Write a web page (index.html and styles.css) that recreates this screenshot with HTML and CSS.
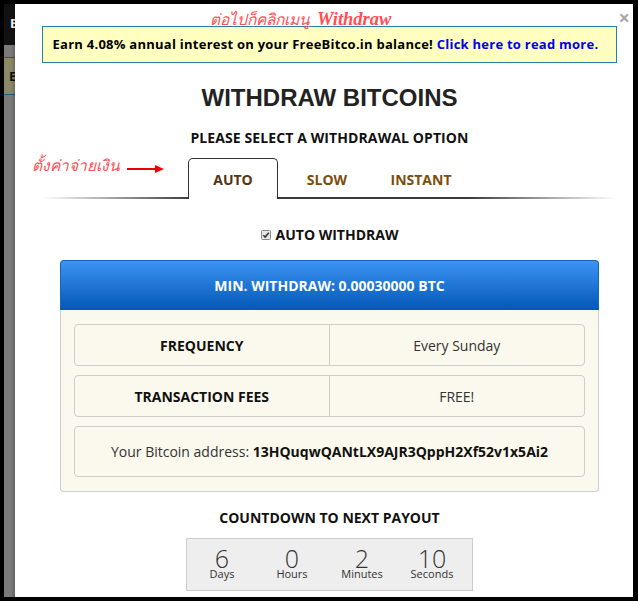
FILE: index.html
```html
<!DOCTYPE html>
<html>
<head>
<meta charset="utf-8">
<link rel="stylesheet" href="styles.css">
</head>
<body>
<div class="frame">
  <div class="backdrop">
    <div class="bd-top"><span>BTC</span></div>
    <div class="bd-gap"></div>
    <div class="bd-box"><span>E</span></div>
    <div class="bd-rest"></div>
  </div>
  <div class="modal">
    <span class="close">×</span>
    <div class="note note-top">ต่อไปก็คลิกเมนู <b>Withdraw</b></div>
    <div class="note note-side">ตั้งค่าจ่ายเงิน</div>
    <svg class="arrow" width="38" height="10" viewBox="0 0 38 10"><line x1="0" y1="5" x2="30" y2="5" stroke="#e00" stroke-width="2"/><polygon points="28,1 37,5 28,9" fill="#e00"/></svg>

    <div class="banner">Earn 4.08% annual interest on your FreeBitco.in balance! <a class="banner-link">Click here to read more.</a></div>

    <h1 class="title">WITHDRAW BITCOINS</h1>
    <h2 class="subtitle">PLEASE SELECT A WITHDRAWAL OPTION</h2>

    <div class="tabs">
      <div class="tab tab-active">AUTO</div>
      <div class="tab">SLOW</div>
      <div class="tab">INSTANT</div>
    </div>

    <div class="auto">
      <span class="check"><svg width="10" height="10" viewBox="0 0 10 10"><rect x="0.5" y="0.5" width="9" height="9" rx="1" fill="#e6e6e6" stroke="#8a8a8a"/><path d="M2.3 5.2 L4.2 7.1 L7.8 2.8" fill="none" stroke="#333" stroke-width="1.6"/></svg></span>
      <span>AUTO WITHDRAW</span>
    </div>

    <div class="panel">
      <div class="panel-head">MIN. WITHDRAW: 0.00030000 BTC</div>
      <div class="panel-body">
        <div class="row">
          <div class="cell cell-key">FREQUENCY</div>
          <div class="cell">Every Sunday</div>
        </div>
        <div class="row">
          <div class="cell cell-key">TRANSACTION FEES</div>
          <div class="cell">FREE!</div>
        </div>
        <div class="row row-single">Your Bitcoin address: <b>13HQuqwQANtLX9AJR3QppH2Xf52v1x5Ai2</b></div>
      </div>
    </div>

    <div class="cd-title">COUNTDOWN TO NEXT PAYOUT</div>
    <div class="countdown">
      <div class="cd-col"><span class="cd-num">6</span><span class="cd-lbl">Days</span></div>
      <div class="cd-col"><span class="cd-num">0</span><span class="cd-lbl">Hours</span></div>
      <div class="cd-col"><span class="cd-num">2</span><span class="cd-lbl">Minutes</span></div>
      <div class="cd-col"><span class="cd-num">10</span><span class="cd-lbl">Seconds</span></div>
    </div>
  </div>
</div>
</body>
</html>
```

FILE: styles.css
```css
* { box-sizing: border-box; }
html, body { margin: 0; padding: 0; }
body {
  background: #000;
  font-family: "Open Sans", "Noto Sans", sans-serif;
  color: #111;
}
.frame {
  display: flex;
  padding: 4px 5px 4px 4px;
  height: 601px;
}
.backdrop {
  width: 11px;
  display: flex;
  flex-direction: column;
  overflow: hidden;
  position: relative;
}
.backdrop::after {
  content: "";
  position: absolute;
  top: 0; bottom: 0; right: 0;
  width: 4px;
  background: linear-gradient(to right, rgba(0,0,0,0), rgba(0,0,0,0.2));
}
.bd-top {
  height: 41px;
  background: #121212;
  color: #fff;
  font-weight: 700;
  font-size: 13px;
  line-height: 18px;
  padding: 10px 0 0 6px;
  white-space: nowrap;
  overflow: hidden;
}
.bd-gap { height: 12px; background: #7b7b7b; }
.bd-box {
  height: 38px;
  background: #8a8868;
  border-top: 1px solid #1e5c78;
  border-bottom: 1px solid #1e5c78;
  font-weight: 700;
  font-size: 13px;
  line-height: 18px;
  padding: 9px 0 0 5px;
  color: #111;
  overflow: hidden;
}
.bd-rest { flex: 1; background: #7b7b7b; }

.modal {
  width: 618px;
  height: 593px;
  background: #fff;
  position: relative;
  padding: 22px 16px 0 27px;
  overflow: hidden;
}
.close {
  position: absolute;
  top: 2px;
  right: 3px;
  font-size: 20px;
  font-weight: 700;
  color: #a8a8a8;
  line-height: 24px;
}
.note {
  position: absolute;
  color: #ff4f55;
  font-size: 15.5px;
  font-style: italic;
  line-height: 20px;
  white-space: nowrap;
}
.note b {
  font-family: "Liberation Serif", serif;
  font-size: 18.5px;
  font-weight: 700;
  font-style: italic;
  margin-left: 3px;
}
.note-top { left: 195px; top: 5px; }
.note-side { left: 17px; top: 151px; }
.arrow { position: absolute; left: 112px; top: 160px; }

.banner {
  height: 37px;
  border: 1px solid #2a80a2;
  background: #ffffc0;
  font-size: 13px;
  font-weight: 700;
  color: #000;
  text-align: center;
  line-height: 35px;
  white-space: nowrap;
  letter-spacing: 0.25px;
  padding-right: 8px;
}
.banner-link { color: #0000f0; }

.title {
  margin: 23px 0 0;
  font-family: "Liberation Sans", Arial, sans-serif;
  font-size: 24px;
  line-height: 24px;
  font-weight: 700;
  color: #222;
  text-align: center;
}
.subtitle {
  margin: 18px 0 0;
  font-size: 14px;
  line-height: 20px;
  font-weight: 700;
  text-align: center;
  color: #111;
  letter-spacing: 0.1px;
}

.tabs {
  margin-top: 10px;
  display: flex;
  justify-content: center;
  gap: 4px;
  padding-right: 5px;
  background: linear-gradient(to right, rgba(60,60,60,0) 0%, #3a3a3a 26%, #3a3a3a 74%, rgba(60,60,60,0) 100%) left bottom / 100% 2px no-repeat;
}
.tab {
  width: 90px;
  height: 41px;
  padding-top: 11px;
  font-size: 14px;
  line-height: 20px;
  font-weight: 700;
  text-align: center;
  color: #7c4e0c;
  border: 1px solid transparent;
  border-bottom: 0;
}
.tab-active {
  color: #533510;
  background: #fff;
  border-color: #333;
  border-radius: 5px 5px 0 0;
}

.auto {
  margin-top: 26px;
  display: flex;
  justify-content: center;
  align-items: center;
  gap: 5px;
  font-size: 14px;
  line-height: 20px;
  font-weight: 700;
  color: #111;
}
.check { display: flex; margin-top: -1px; }

.panel {
  width: 539px;
  margin: 15px auto 0;
}
.panel-head {
  height: 50px;
  padding-top: 15px;
  border-radius: 4px 4px 0 0;
  background: linear-gradient(#3d93f2, #0358b6);
  border: 1px solid #1565c0;
  border-bottom: 0;
  color: #fff;
  font-size: 14px;
  line-height: 20px;
  font-weight: 700;
  text-align: center;
}
.panel-body {
  background: #fbf9ed;
  border: 1px solid #cfcfcf;
  border-top: 0;
  border-radius: 0 0 4px 4px;
  padding: 14px 13px 14px;
  display: flex;
  flex-direction: column;
  gap: 9px;
}
.row {
  display: grid;
  grid-template-columns: 1fr 1fr;
  border: 1px solid #cdcdcd;
  border-radius: 4px;
  background: #fbf9ed;
  font-size: 14px;
  line-height: 20px;
  text-align: center;
  color: #333;
}
.cell { padding: 11px 8px 9px; }
.cell-key {
  font-weight: 700;
  color: #111;
  border-right: 1px solid #cdcdcd;
}
.row-single {
  display: block;
  padding: 15px 8px 14px;
}
.row-single b { color: #111; }

.cd-title {
  margin-top: 16px;
  font-size: 14px;
  line-height: 20px;
  font-weight: 700;
  text-align: center;
  color: #111;
}
.countdown {
  width: 287px;
  height: 53px;
  margin: 10px auto 0;
  background: #eee;
  border: 1px solid #ccc;
  display: flex;
  padding-top: 9px;
  color: #333;
}
.cd-col {
  width: 70px;
  display: flex;
  flex-direction: column;
  align-items: center;
}
.cd-num {
  font-size: 25px;
  line-height: 20px;
  font-weight: 300;
}
.cd-lbl {
  font-size: 11px;
  line-height: 12px;
}
```
